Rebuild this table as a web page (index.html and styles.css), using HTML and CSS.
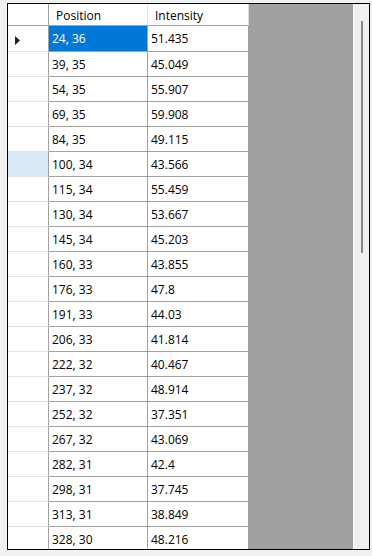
FILE: index.html
```html
<!DOCTYPE html>
<html>
<head>
<meta charset="utf-8">
<link rel="stylesheet" href="styles.css">
</head>
<body>
<div class="dgv">
  <div class="table">
    <div class="corner"></div>
    <div class="colhead">Position</div>
    <div class="colhead">Intensity</div>

    <div class="rowhead current"><svg class="arrow" width="5" height="9" viewBox="0 0 5 9"><polygon points="0,0 5,4.5 0,9" fill="#222"/></svg></div>
    <div class="cell selected">24, 36</div><div class="cell">51.435</div>

    <div class="rowhead"></div><div class="cell">39, 35</div><div class="cell">45.049</div>
    <div class="rowhead"></div><div class="cell">54, 35</div><div class="cell">55.907</div>
    <div class="rowhead"></div><div class="cell">69, 35</div><div class="cell">59.908</div>
    <div class="rowhead"></div><div class="cell">84, 35</div><div class="cell">49.115</div>
    <div class="rowhead hover"></div><div class="cell">100, 34</div><div class="cell">43.566</div>
    <div class="rowhead"></div><div class="cell">115, 34</div><div class="cell">55.459</div>
    <div class="rowhead"></div><div class="cell">130, 34</div><div class="cell">53.667</div>
    <div class="rowhead"></div><div class="cell">145, 34</div><div class="cell">45.203</div>
    <div class="rowhead"></div><div class="cell">160, 33</div><div class="cell">43.855</div>
    <div class="rowhead"></div><div class="cell">176, 33</div><div class="cell">47.8</div>
    <div class="rowhead"></div><div class="cell">191, 33</div><div class="cell">44.03</div>
    <div class="rowhead"></div><div class="cell">206, 33</div><div class="cell">41.814</div>
    <div class="rowhead"></div><div class="cell">222, 32</div><div class="cell">40.467</div>
    <div class="rowhead"></div><div class="cell">237, 32</div><div class="cell">48.914</div>
    <div class="rowhead"></div><div class="cell">252, 32</div><div class="cell">37.351</div>
    <div class="rowhead"></div><div class="cell">267, 32</div><div class="cell">43.069</div>
    <div class="rowhead"></div><div class="cell">282, 31</div><div class="cell">42.4</div>
    <div class="rowhead"></div><div class="cell">298, 31</div><div class="cell">37.745</div>
    <div class="rowhead"></div><div class="cell">313, 31</div><div class="cell">38.849</div>
    <div class="rowhead"></div><div class="cell">328, 30</div><div class="cell">48.216</div>
  </div>
  <div class="workspace"></div>
  <div class="vscroll"><div class="thumb"></div></div>
</div>
</body>
</html>
```
FILE: styles.css
```css
html, body {
  margin: 0;
  padding: 0;
  background: #f0f0f0;
}

body {
  font-family: "Open Sans", "Noto Sans", sans-serif;
  font-size: 12px;
  color: #000;
}

.dgv {
  box-sizing: border-box;
  width: 363px;
  height: 547px;
  margin: 3px 0 0 7px;
  border: 1px solid #000;
  display: flex;
  overflow: hidden;
  background: #a0a0a0;
}

.table {
  flex: none;
  width: 241px;
  display: grid;
  grid-template-columns: 41px 99px 101px;
  grid-template-rows: 22px 26px;
  grid-auto-rows: 25px;
  align-content: start;
  background: #fff;
  overflow: hidden;
}

.table > div {
  box-sizing: border-box;
  display: flex;
  align-items: center;
  white-space: nowrap;
  overflow: hidden;
}

.corner {
  background: #fff;
  border-right: 1px solid #a0a0a0;
  border-bottom: 1px solid #a0a0a0;
}

.colhead {
  background: #fff;
  border-right: 1px solid #e5e5e5;
  border-bottom: 1px solid #a0a0a0;
  padding-left: 7px;
  padding-top: 1px;
}

.colhead:nth-child(3) {
  border-right-color: #dcdcdc;
  padding-left: 7px;
}

.rowhead {
  background: #fff;
  border-right: 1px solid #a0a0a0;
  border-bottom: 1px solid #e3e3e3;
}

.rowhead.current {
  padding-left: 7px;
  padding-top: 3px;
}

.rowhead.hover {
  background: #d9ebf9;
}

.cell {
  background: #fff;
  border-right: 1px solid #a0a0a0;
  border-bottom: 1px solid #a0a0a0;
  padding-left: 3px;
}

.cell.selected {
  background: #0078d7;
  color: #fff;
}

.workspace {
  flex: 1;
  background: #a0a0a0;
}

.vscroll {
  flex: none;
  box-sizing: border-box;
  width: 16px;
  background: #f0f0f0;
  border-left: 1px solid #f8f8f8;
}

.thumb {
  width: 2px;
  height: 232px;
  margin: 17px 0 0 7px;
  background: #878787;
}
```
